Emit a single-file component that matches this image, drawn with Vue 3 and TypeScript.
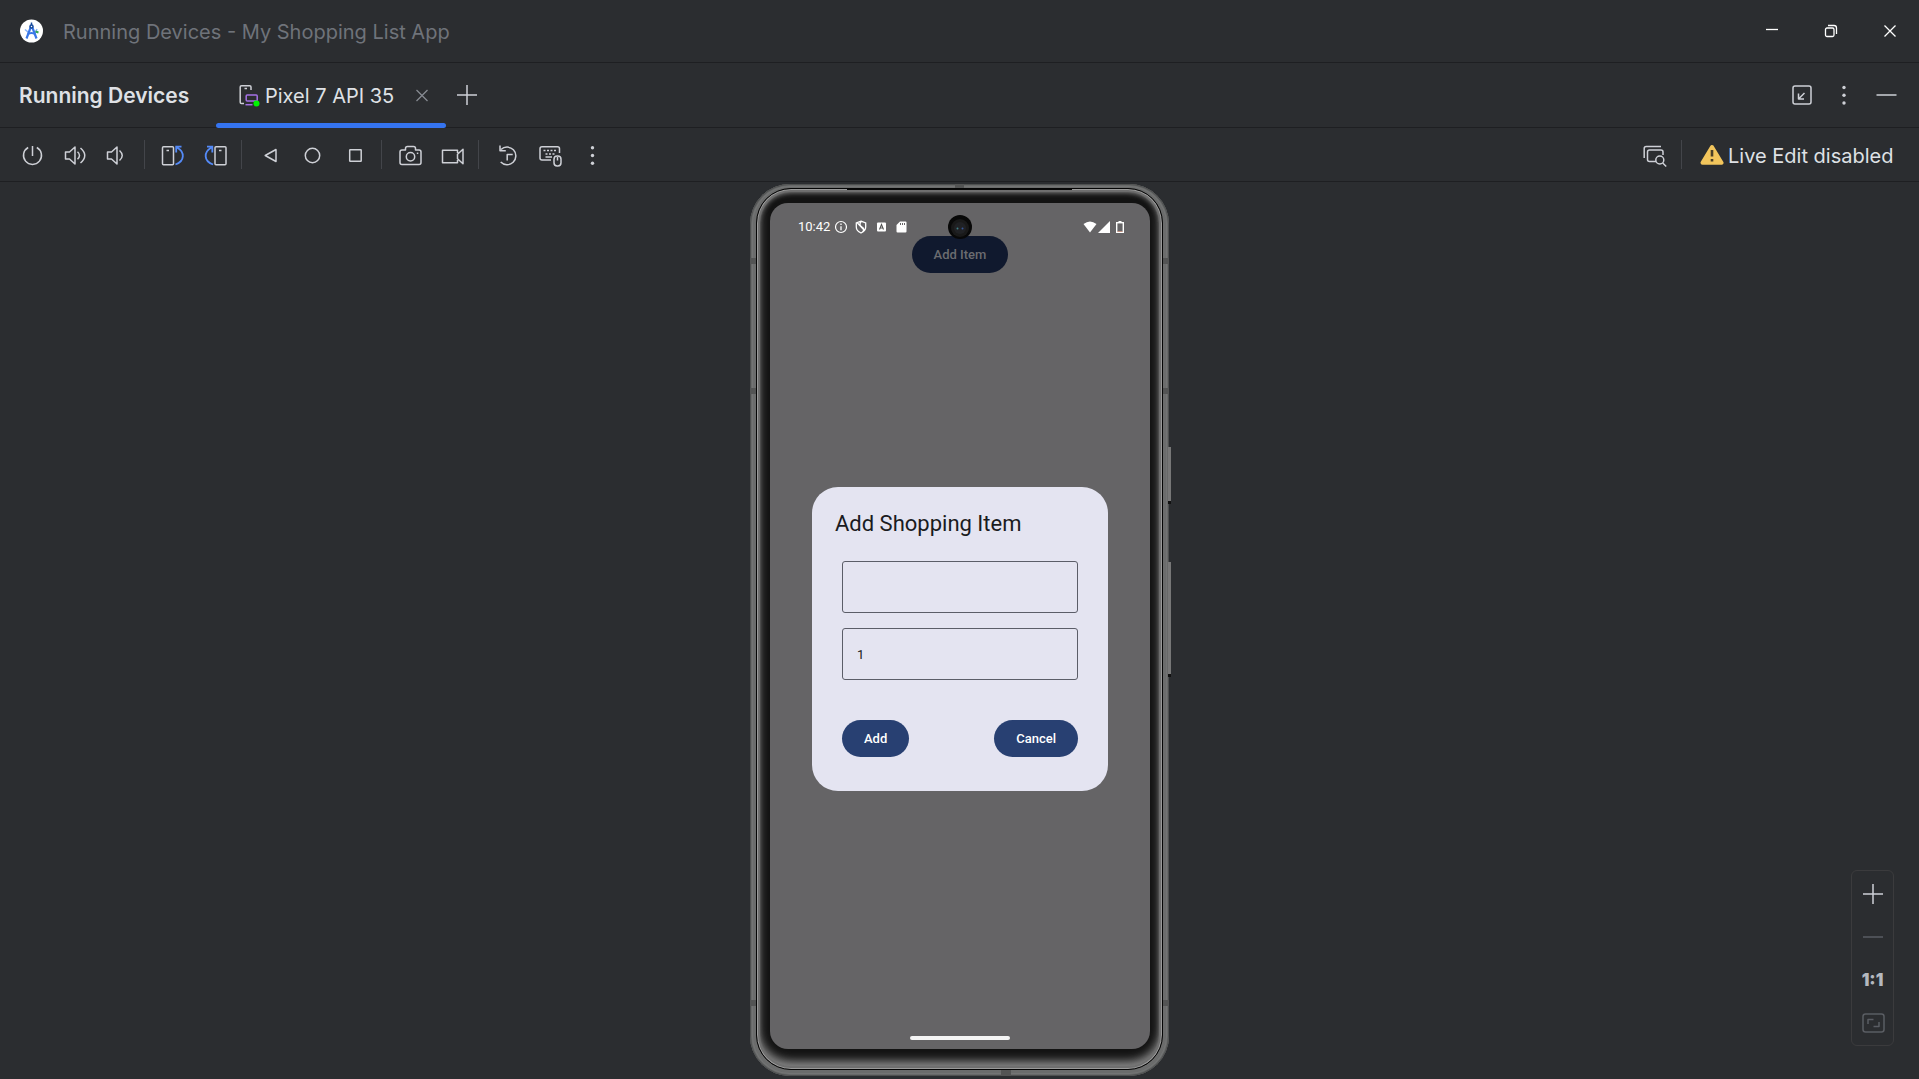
<script setup lang="ts">
import { ref } from 'vue'

const itemName = ref('')
const quantity = ref('1')
</script>

<template>
  <div class="window">
    <header class="titlebar">
      <svg class="app-logo" width="24" height="24" viewBox="0 0 24 24" aria-hidden="true">
        <circle cx="11.500" cy="12" r="11.500" fill="#fff" />
        <path d="M5 10.500l3.500 3M17 10l-2 4" stroke="#8ab4f8" stroke-width="1.500" fill="none" />
        <path d="M15.500 12.500l3 1" stroke="#34a853" stroke-width="2" />
        <path d="M6.500 19.500L11 7.500M16.500 19.500L12 7.500" stroke="#3b78e7" stroke-width="2.200" fill="none" />
        <path d="M7.500 15.500q4-3 8 0" stroke="#3b78e7" stroke-width="2" fill="none" />
        <circle cx="11.500" cy="7.500" r="1.500" fill="#fff" stroke="#174a9c" stroke-width="1.500" />
        <path d="M11.500 3.500v2.500" stroke="#174a9c" stroke-width="1.500" />
      </svg>
      <h1 class="title">Running Devices - My Shopping List App</h1>
      <div class="window-controls">
        <button type="button" aria-label="Minimize">
          <svg width="14" height="14" viewBox="0 0 14 14"><path d="M1 5.500h12" /></svg>
        </button>
        <button type="button" aria-label="Restore">
          <svg width="14" height="14" viewBox="0 0 14 14">
            <rect x="1.500" y="4" width="8.500" height="8.500" rx="1.500" />
            <path d="M4 1.500h6q2.500 0 2.500 2.500v6" />
          </svg>
        </button>
        <button type="button" aria-label="Close">
          <svg width="14" height="14" viewBox="0 0 14 14"><path d="M1.500 1.500l11 11M12.500 1.500l-11 11" /></svg>
        </button>
      </div>
    </header>

    <nav class="tabs">
      <h2 class="tool-name">Running Devices</h2>
      <div class="tab">
        <svg width="24" height="24" viewBox="0 0 24 24" aria-hidden="true">
          <path d="M15 7V4q0-1.300-1.300-1.300H5.500Q4.200 2.700 4.200 4v15.200q0 1.300 1.300 1.300H8M8.500 5.500H11" stroke="#ced0d6" stroke-width="1.500" fill="none" />
          <rect x="10.200" y="12" width="11" height="6" rx="1" stroke="#a571e6" stroke-width="1.500" fill="none" />
          <path d="M9.500 21.700h7" stroke="#a571e6" stroke-width="1.500" />
          <circle cx="20.500" cy="20.500" r="3" fill="#00f500" />
        </svg>
        <span class="tab-label">Pixel 7 API 35</span>
        <button class="tab-close" type="button" aria-label="Close tab">
          <svg width="14" height="14" viewBox="0 0 14 14"><path d="M1.500 2l11 11M12.500 2l-11 11" stroke="#868a91" stroke-width="1.300" /></svg>
        </button>
      </div>
      <button class="tool" type="button" aria-label="Add device">
        <svg class="icon" viewBox="0 0 24 24"><path d="M12 2v20M2 12h20" /></svg>
      </button>
      <div class="spacer"></div>
      <button class="tool" type="button" aria-label="Dock">
        <svg class="icon" viewBox="0 0 24 24">
          <rect x="3" y="3" width="18" height="18" rx="2" />
          <path d="M14.500 10l-6 6M8.500 10.500V16H14" />
        </svg>
      </button>
      <button class="tool" type="button" aria-label="Options">
        <svg class="icon" viewBox="0 0 24 24"><g class="dots"><circle cx="12" cy="4.500" r="1.700" /><circle cx="12" cy="12.200" r="1.700" /><circle cx="12" cy="20" r="1.700" /></g></svg>
      </button>
      <button class="tool" type="button" aria-label="Hide">
        <svg class="icon" viewBox="0 0 24 24"><path d="M2.500 12h20" /></svg>
      </button>
    </nav>

    <div class="toolbar">
      <button class="tool" type="button" aria-label="Power">
        <svg class="icon" viewBox="0 0 24 24"><path d="M12.500 3v10M8.200 4.500a9 9 0 1 0 8.600 0" /></svg>
      </button>
      <button class="tool" type="button" aria-label="Volume up">
        <svg class="icon" viewBox="0 0 24 24"><path d="M2.500 9h4L12 4v17l-5.500-5h-4zM14.500 8.800q4 3.700 0 7.400M17.500 5q8.500 7.500 0 15" /></svg>
      </button>
      <button class="tool" type="button" aria-label="Volume down">
        <svg class="icon" viewBox="0 0 24 24"><path d="M1.500 9h4L11 4v17l-5.500-5h-4zM13.500 7.500q5.500 5 0 10" /></svg>
      </button>
      <i class="separator"></i>
      <button class="tool" type="button" aria-label="Rotate left">
        <svg class="icon" viewBox="0 0 24 24">
          <rect x="2.500" y="3.700" width="11" height="18" rx="1" /><path d="M6.500 7.500H9" />
          <path class="blue" d="M15.500 21.500C25 18 25 9 17 4.500M21.500 3.700h-5.300V9.500" />
        </svg>
      </button>
      <button class="tool" type="button" aria-label="Rotate right">
        <svg class="icon" viewBox="0 0 24 24">
          <rect x="12" y="3.700" width="11" height="18" rx="1" /><path d="M16 7.500h2.500" />
          <path class="blue" d="M10 21.500C.5 18 .5 9 8.500 4.500M4 3.700h5.300V9.500" />
        </svg>
      </button>
      <i class="separator"></i>
      <button class="tool" type="button" aria-label="Back">
        <svg class="icon" viewBox="0 0 24 24"><path d="M8.200 12.500L19 6.500v12z" /></svg>
      </button>
      <button class="tool" type="button" aria-label="Home">
        <svg class="icon" viewBox="0 0 24 24"><circle cx="12.500" cy="12.500" r="7.200" /></svg>
      </button>
      <button class="tool" type="button" aria-label="Overview">
        <svg class="icon" viewBox="0 0 24 24"><rect x="6.700" y="6.700" width="11.500" height="11.500" rx=".5" /></svg>
      </button>
      <i class="separator"></i>
      <button class="tool" type="button" aria-label="Screenshot">
        <svg class="icon" viewBox="0 0 24 24">
          <path d="M3 9q0-2 2-2h3.500V5.500q0-2 2-2h6q2 0 2 2V7H22q2 0 2 2v10.500q0 2-2 2H5q-2 0-2-2z" />
          <circle cx="13.500" cy="13.800" r="4.200" /><path d="M19.800 10.300h1.500" />
        </svg>
      </button>
      <button class="tool" type="button" aria-label="Record screen">
        <svg class="icon" viewBox="0 0 24 24"><path d="M17.500 10V7.200h-15v12.600h15V17M17.500 11.200l5.500-5v14.600l-5.500-5z" /></svg>
      </button>
      <i class="separator"></i>
      <button class="tool" type="button" aria-label="Snapshots">
        <svg class="icon" viewBox="0 0 24 24">
          <path d="M7 6.500a8.800 8.800 0 1 1-.3 12.500M6 2.500v5.300H11.800" />
          <path d="M13.200 17.500v-6h5.500" />
        </svg>
      </button>
      <button class="tool" type="button" aria-label="Hardware input">
        <svg class="icon" viewBox="0 0 24 24">
          <path d="M14 17H5q-2 0-2-2V5.700q0-2 2-2h15.500q2 0 2 2V10" />
          <path d="M6.500 7.500h13.500M8.500 11h10" stroke-dasharray="2 1.500" />
          <path d="M8.500 14h6.500" />
          <rect x="17" y="13" width="7" height="10" rx="3.200" /><path d="M20.500 14v3.500" />
        </svg>
      </button>
      <button class="tool" type="button" aria-label="More">
        <svg class="icon" viewBox="0 0 24 24"><g class="dots"><circle cx="12.500" cy="4.800" r="1.700" /><circle cx="12.500" cy="12.500" r="1.700" /><circle cx="12.500" cy="20.200" r="1.700" /></g></svg>
      </button>
      <div class="spacer"></div>
      <button class="tool" type="button" aria-label="Layout inspector">
        <svg class="icon" viewBox="0 0 24 24">
          <path d="M1.200 15V5.500q0-2 2-2H18M13 18.500H6.500q-2 0-2-2V9q0-2 2-2H18q2 0 2 2v3" />
          <circle cx="16.800" cy="17" r="4" /><path d="M19.700 20l3.500 3.500" />
        </svg>
      </button>
      <i class="separator"></i>
      <button class="live-edit" type="button">
        <svg width="24" height="24" viewBox="0 0 24 24" aria-hidden="true">
          <path d="M12 4L21.500 19.800H2.500z" fill="#f2c55c" stroke="#f2c55c" stroke-width="4" stroke-linejoin="round" />
          <path d="M12 7v6.500M12 16v2.600" stroke="#4a3f27" stroke-width="2.600" />
        </svg>
        <span>Live Edit disabled</span>
      </button>
    </div>

    <main class="stage">
      <div class="phone">
        <i class="key power"></i>
        <i class="key volume"></i>
        <i class="band left high"></i><i class="band left mid"></i><i class="band left low"></i>
        <i class="band right high"></i><i class="band right mid"></i><i class="band right low"></i>
        <i class="band top"></i><i class="band bottom"></i>
        <div class="glass">
          <i class="speaker"></i>
          <div class="screen">
            <div class="app">
              <button class="pill dimmed" type="button">Add Item</button>
            </div>
            <div class="scrim">
              <form class="dialog" @submit.prevent>
                <h3>Add Shopping Item</h3>
                <div class="fields">
                  <input v-model="itemName" type="text" aria-label="Item name" />
                  <input v-model="quantity" type="text" inputmode="numeric" aria-label="Quantity" />
                </div>
                <div class="actions">
                  <button class="pill" type="submit">Add</button>
                  <button class="pill" type="button">Cancel</button>
                </div>
              </form>
            </div>
            <div class="statusbar">
              <span>10:42</span>
              <svg width="14" height="14" viewBox="0 0 14 14"><circle cx="7" cy="7" r="5.500" fill="none" stroke="#fff" stroke-width="1.200" /><path d="M7 6.200v4M7 3.500v1.500" stroke="#fff" stroke-width="1.300" /></svg>
              <svg width="14" height="14" viewBox="0 0 14 14"><path d="M7 1.200l4.700 1.800v4q0 4-4.700 6-4.700-2-4.700-6V3zM3.500 3l7 7.500M7 1.500Q4.500 5 8 7t.5 5" fill="none" stroke="#fff" stroke-width="1.300" /></svg>
              <svg width="14" height="14" viewBox="0 0 14 14"><rect x="3" y="2.500" width="9" height="9" rx="1" fill="#fff" /><path d="M5.500 9.500l2-5 2 5M6 8h3" fill="none" stroke="#555" stroke-width="1.100" /></svg>
              <svg width="14" height="14" viewBox="0 0 14 14"><path d="M6 1.500h5.500q1 0 1 1v9q0 1-1 1h-8q-1 0-1-1V5z" fill="#fff" /><path d="M6.500 3v2M8.500 3v2M10.500 3v2" stroke="#656466" /></svg>
              <div class="spacer"></div>
              <svg width="42" height="14" viewBox="0 0 42 14">
                <path d="M.5 4Q7-1 13.500 4L7 12.500z" fill="#fff" />
                <path d="M27 1v12H15z" fill="#fff" />
                <path d="M35.500 1h3v1.500h-3z" fill="#fff" /><rect x="33.700" y="2.700" width="6.600" height="9.600" fill="none" stroke="#fff" stroke-width="1.400" />
                <path d="M34.500 11.500h5" stroke="#c98f7c" stroke-width=".8" />
              </svg>
            </div>
            <svg class="camera" width="24" height="24" viewBox="0 0 24 24" aria-hidden="true">
              <circle cx="12" cy="12" r="12" fill="#080808" /><circle cx="12" cy="13" r="9" fill="#191919" /><circle cx="12" cy="13" r="6" fill="#202124" />
              <circle cx="9.500" cy="13.500" r="1" fill="#3f7f86" /><circle cx="14.500" cy="13.500" r="1" fill="#37569b" />
            </svg>
            <i class="home-bar"></i>
          </div>
        </div>
      </div>

      <aside class="zoom">
        <button type="button" aria-label="Zoom in"><svg class="icon" viewBox="0 0 24 24"><path d="M12 2v20M2 12h20" /></svg></button>
        <button class="off" type="button" aria-label="Zoom out"><svg class="icon" viewBox="0 0 24 24"><path d="M2 12h20" /></svg></button>
        <button type="button">1:1</button>
        <button class="off" type="button" aria-label="Zoom to fit">
          <svg class="icon" viewBox="0 0 24 24"><rect x="2" y="3" width="21" height="18" rx="2.500" /><path d="M7 13V8.500h5.500M18 11v4.500h-5.500" /></svg>
        </button>
      </aside>
    </main>
  </div>
</template>

<style>
body {
  margin: 0;
  background: #2b2d30;
}
</style>

<style scoped>
* {
  box-sizing: border-box;
}
.window {
  display: flex;
  flex-direction: column;
  min-height: 100vh;
  background: #2b2d30;
  color: #dfe1e5;
  font: 400 20px/24px Inter, sans-serif;
}
button {
  display: flex;
  align-items: center;
  justify-content: center;
  padding: 0;
  border: 0;
  background: none;
  color: inherit;
  font: inherit;
}
h1, h2, h3 {
  margin: 0;
}
.spacer {
  flex: 1;
}
.icon {
  display: block;
  width: 24px;
  height: 24px;
  overflow: visible;
  fill: none;
  stroke: #ced0d6;
  stroke-width: 1.5;
  stroke-linejoin: round;
}
.icon .blue {
  stroke: #548af7;
  stroke-width: 1.8;
  stroke-linejoin: miter;
}
.icon .dots {
  fill: #ced0d6;
  stroke: none;
}
.titlebar, .tabs, .toolbar {
  display: flex;
  align-items: center;
  border-bottom: 1px solid #1e1f22;
}
.titlebar {
  height: 63px;
  padding-left: 20px;
}
.title, .tool-name, .tab-label, .live-edit span {
  padding-top: 2px;
}
.title {
  margin-left: 19px;
  color: #6f737a;
  font-weight: 400;
  font-size: 20px;
}
.window-controls {
  display: flex;
  margin-left: auto;
}
.window-controls button {
  width: 59px;
  height: 62px;
}
.window-controls svg {
  fill: none;
  stroke: #fff;
  stroke-width: 1.3;
}
.tabs {
  height: 65px;
  padding: 0 12px 0 19px;
}
.tool-name {
  width: 197px;
  font-weight: 600;
  font-size: 21px;
}
.tab {
  position: relative;
  display: flex;
  align-items: center;
  height: 64px;
  padding: 0 17px 0 20px;
}
.tab::after {
  content: "";
  position: absolute;
  right: 0;
  bottom: -1px;
  left: 0;
  height: 5px;
  border-radius: 3px;
  background: #3574f0;
}
.tab-label {
  width: 155px;
  padding-left: 5px;
}
.tool {
  width: 42px;
  height: 42px;
}
.toolbar {
  gap: 1px;
  height: 54px;
  padding: 0 20px 0 11px;
}
.separator {
  width: 1px;
  height: 29px;
  margin: 0 5px 0 4px;
  background: #43454a;
}
.live-edit {
  gap: 4px;
  padding-left: 12px;
}
.live-edit span {
  min-width: 171px;
  text-align: left;
}
.stage {
  position: relative;
  display: flex;
  flex: 1;
  justify-content: center;
  padding: 2px 0 3px;
}
.phone {
  position: relative;
  display: flex;
  width: 419px;
  min-height: 600px;
  padding: 4px 6px 6px;
  border-radius: 40px;
  background: #6b6c6c;
  box-shadow: inset 0 0 2px 1px #414343, inset 0 0 0 3px #777878;
}
.glass {
  position: relative;
  display: flex;
  flex: 1;
  padding: 14px 12px 20px 13px;
  border: 1px solid #050505;
  border-radius: 35px;
  background: #131313;
  box-shadow: inset 0 0 0 1px #9a9a9a, inset 0 0 1px 3px #6f6f6f, inset 0 3px 5px 1px #777, inset 0 -6px 10px 2px #8a8a8a;
}
.speaker {
  position: absolute;
  top: 0;
  left: 90px;
  right: 90px;
  height: 1px;
  background: #080808;
}
.screen {
  position: relative;
  flex: 1;
  overflow: hidden;
  border-radius: 18px;
  background: #656466;
  font-family: Roboto, sans-serif;
}
.key {
  position: absolute;
  right: -2px;
  width: 3px;
  border: solid #111;
  border-width: 0 0 3px;
  background: #777;
}
.key.power {
  top: 263px;
  height: 57px;
}
.key.volume {
  top: 378px;
  height: 115px;
}
.band {
  position: absolute;
  width: 6px;
  height: 6px;
  background: #535454;
}
.band.left { left: 0; }
.band.right { right: 0; }
.band.high { top: 74px; }
.band.mid { top: 204px; }
.band.low { bottom: 70px; }
.band.top { top: 0; left: 205px; width: 9px; height: 4px; }
.band.bottom { bottom: 0; left: 251px; width: 10px; }
.app {
  display: flex;
  justify-content: center;
  padding-top: 33px;
}
.pill {
  height: 37px;
  padding: 0 22px;
  border-radius: 19px;
  background: #284072;
  color: #fff;
  font: 500 13px/18px Roboto, sans-serif;
}
.pill.dimmed {
  background: #10192e;
  color: #6b6c70;
}
.scrim {
  position: absolute;
  inset: 0;
  display: flex;
  align-items: center;
  justify-content: center;
  padding-top: 26px;
}
.dialog {
  width: 296px;
  padding: 22px 30px 34px;
  border-radius: 26px;
  background: #e4e4f1;
  color: #1a1b21;
}
.dialog h3 {
  margin: 0 -7px 22px;
  font: 400 22px/30px Roboto, sans-serif;
}
.fields {
  display: grid;
  gap: 15px;
}
.fields input {
  width: 100%;
  height: 52px;
  padding: 0 14px;
  border: 1px solid #5b5d68;
  border-radius: 3px;
  background: none;
  color: #1a1b21;
  font: 400 13px/18px Roboto, sans-serif;
}
.actions {
  display: flex;
  justify-content: space-between;
  margin-top: 40px;
}
.statusbar {
  position: absolute;
  top: 14px;
  right: 25px;
  left: 28px;
  display: flex;
  gap: 6px;
  align-items: center;
  color: #fff;
  font-size: 13px;
  line-height: 20px;
}
.statusbar span {
  margin-right: -2px;
}
.camera {
  position: absolute;
  top: 12px;
  left: calc(50% - 12px);
}
.home-bar {
  position: absolute;
  bottom: 9px;
  left: calc(50% - 50px);
  width: 100px;
  height: 4px;
  border-radius: 2px;
  background: #f4f4f4;
}
.zoom {
  position: absolute;
  right: 25px;
  bottom: 33px;
  padding: 1px 0;
  border: 1px solid #3b3b3d;
  border-radius: 6px;
}
.zoom button {
  width: 41px;
  height: 43px;
  color: #b4b8bf;
  font-weight: 900;
  font-size: 17px;
}
.zoom .off .icon {
  stroke: #5a5d63;
}
</style>
